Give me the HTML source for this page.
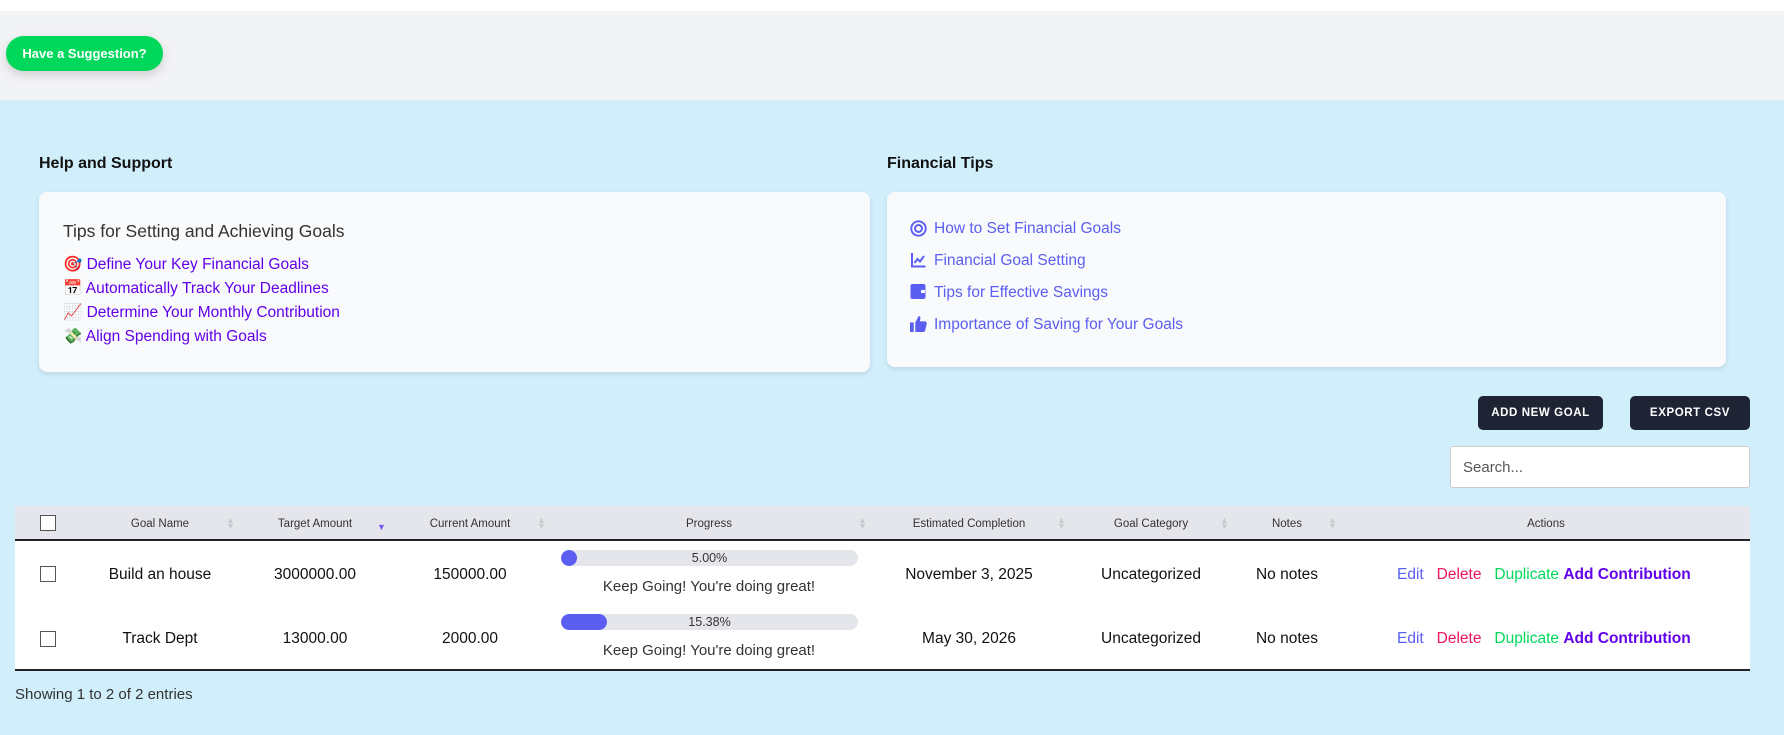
<!DOCTYPE html>
<html><head><meta charset="utf-8"><style>
*{margin:0;padding:0;box-sizing:border-box}
body{width:1784px;height:735px;overflow:hidden;background:#d1eefb;font-family:"Liberation Sans",sans-serif;position:relative;color:#111}
.a{position:absolute;white-space:nowrap}
.top{position:absolute;left:0;top:0;width:1784px;height:11px;background:#fff}
.gray{position:absolute;left:0;top:11px;width:1784px;height:89px;background:#f2f3f5}
.sug{left:6px;top:36px;width:157px;height:35px;border-radius:18px;background:#00d85c;color:#fff;font-weight:bold;font-size:13px;line-height:35px;text-align:center;box-shadow:0 4px 10px rgba(0,0,0,.15)}
.h{font-weight:bold;font-size:16px;color:#111}
.card{position:absolute;background:#f8fafc;border-radius:8px;box-shadow:0 2px 5px rgba(0,0,0,.1)}
.lk{color:#6200ea;font-size:15.5px}
.rl{color:#5b5ef0;font-size:15.5px}
.btn{background:#1e2433;color:#fff;font-size:11.5px;font-weight:bold;letter-spacing:0.6px;border-radius:5px;text-align:center;line-height:34px;height:34px}
.search{left:1450px;top:446px;width:300px;height:42px;background:#fff;border:1px solid #ccc;border-radius:3px;font-size:15px;color:#555;padding:12px 12px}
.thead{position:absolute;left:15px;top:506px;width:1735px;height:35px;background:#e4e6eb;border-bottom:2px solid #222}
.tbody{position:absolute;left:15px;top:541px;width:1735px;height:130px;background:#fff;border-bottom:2px solid #222}
.th{font-size:11.5px;color:#333;transform:translateX(-50%);top:518px}
.td{font-size:15.5px;color:#111;transform:translateX(-50%)}
.cb{position:absolute;width:16px;height:16px;border:1.5px solid #555;background:#fff}
.so{font-size:9px;color:#c8cad0;line-height:6px;top:517px}
.bar{position:absolute;left:561px;width:297px;height:16px;background:#e4e6eb;border-radius:8px;overflow:hidden}
.fill{position:absolute;left:0;top:0;height:16px;background:#5b5ef0;border-radius:8px}
.pt{position:absolute;width:100%;text-align:center;font-size:12.5px;line-height:16px;color:#333}
.msg{font-size:15px;color:#333;transform:translateX(-50%);left:709px}
.act{font-size:15.5px}
</style></head><body>
<div class="top"></div><div class="gray"></div>
<div class="a sug">Have a Suggestion?</div>

<div class="a h" style="left:39px;top:155px">Help and Support</div>
<div class="a h" style="left:887px;top:155px">Financial Tips</div>

<div class="card" style="left:39px;top:192px;width:831px;height:180px"></div>
<div class="a" style="left:63px;top:221px;font-size:17.5px;color:#333">Tips for Setting and Achieving Goals</div>
<div class="a lk" style="left:63px;top:255px">🎯 Define Your Key Financial Goals</div>
<div class="a lk" style="left:63px;top:279px">📅 Automatically Track Your Deadlines</div>
<div class="a lk" style="left:63px;top:303px">📈 Determine Your Monthly Contribution</div>
<div class="a lk" style="left:63px;top:327px">💸 Align Spending with Goals</div>

<div class="card" style="left:887px;top:192px;width:839px;height:175px"></div>
<svg class="a" style="left:910px;top:220px" width="17" height="17" viewBox="0 0 16 16"><circle cx="8" cy="8" r="6.8" fill="none" stroke="#5b5ef0" stroke-width="1.8"/><circle cx="8" cy="8" r="3.3" fill="none" stroke="#5b5ef0" stroke-width="1.8"/></svg>
<div class="a rl" style="left:934px;top:220px">How to Set Financial Goals</div>
<svg class="a" style="left:910px;top:252px" width="17" height="16" viewBox="0 0 16 16"><path d="M1.5 1v13.5H15" fill="none" stroke="#5b5ef0" stroke-width="2"/><path d="M4 11l3-4 2.5 2.5L13.5 4" fill="none" stroke="#5b5ef0" stroke-width="2"/></svg>
<div class="a rl" style="left:934px;top:252px">Financial Goal Setting</div>
<svg class="a" style="left:910px;top:283px" width="16" height="17" viewBox="0 0 16 17"><rect x="0.5" y="1" width="15" height="15" rx="2" fill="#5b5ef0"/><rect x="11" y="7" width="4" height="3" fill="#f8fafc"/></svg>
<div class="a rl" style="left:934px;top:284px">Tips for Effective Savings</div>
<svg class="a" style="left:910px;top:315px" width="17" height="17" viewBox="0 0 16 16"><rect x="0" y="7" width="3.5" height="9" fill="#5b5ef0"/><path d="M5 7l3-6c1.5 0 2 1 1.7 2.5L9.2 6H14c1.2 0 2 1 1.7 2.2l-1.3 6.2c-.2 1-1 1.6-2 1.6H5z" fill="#5b5ef0"/></svg>
<div class="a rl" style="left:934px;top:316px">Importance of Saving for Your Goals</div>

<div class="a btn" style="left:1478px;top:396px;width:125px">ADD NEW GOAL</div>
<div class="a btn" style="left:1630px;top:396px;width:120px">EXPORT CSV</div>
<div class="a search">Search...</div>

<div class="thead"></div><div class="tbody"></div>
<div class="cb" style="left:40px;top:515px"></div>
<div class="a th" style="left:160px">Goal Name</div>
<div class="a th" style="left:315px">Target Amount</div>
<div class="a th" style="left:470px">Current Amount</div>
<div class="a th" style="left:709px">Progress</div>
<div class="a th" style="left:969px">Estimated Completion</div>
<div class="a th" style="left:1151px">Goal Category</div>
<div class="a th" style="left:1287px">Notes</div>
<div class="a th" style="left:1546px">Actions</div>
<div class="a so" style="left:226px">▲<br>▼</div>
<div class="a" style="left:377px;top:522px;font-size:9px;color:#7b5cf0">▼</div>
<div class="a so" style="left:537px">▲<br>▼</div>
<div class="a so" style="left:858px">▲<br>▼</div>
<div class="a so" style="left:1057px">▲<br>▼</div>
<div class="a so" style="left:1220px">▲<br>▼</div>
<div class="a so" style="left:1328px">▲<br>▼</div>

<div class="cb" style="left:40px;top:566px"></div>
<div class="a td" style="left:160px;top:566px">Build an house</div>
<div class="a td" style="left:315px;top:566px">3000000.00</div>
<div class="a td" style="left:470px;top:566px">150000.00</div>
<div class="bar" style="top:550px"><div class="fill" style="width:16px"></div><div class="pt">5.00%</div></div>
<div class="a msg" style="top:578px">Keep Going! You're doing great!</div>
<div class="a td" style="left:969px;top:566px">November 3, 2025</div>
<div class="a td" style="left:1151px;top:566px">Uncategorized</div>
<div class="a td" style="left:1287px;top:566px">No notes</div>
<div class="a act" style="left:1397px;top:566px"><span style="color:#5b5ef0">Edit</span>&nbsp;&nbsp; <span style="color:#f0145a">Delete</span>&nbsp;&nbsp; <span style="color:#00d85c">Duplicate</span> <b style="color:#6200ea">Add Contribution</b></div>

<div class="cb" style="left:40px;top:631px"></div>
<div class="a td" style="left:160px;top:630px">Track Dept</div>
<div class="a td" style="left:315px;top:630px">13000.00</div>
<div class="a td" style="left:470px;top:630px">2000.00</div>
<div class="bar" style="top:614px"><div class="fill" style="width:46px"></div><div class="pt">15.38%</div></div>
<div class="a msg" style="top:642px">Keep Going! You're doing great!</div>
<div class="a td" style="left:969px;top:630px">May 30, 2026</div>
<div class="a td" style="left:1151px;top:630px">Uncategorized</div>
<div class="a td" style="left:1287px;top:630px">No notes</div>
<div class="a act" style="left:1397px;top:630px"><span style="color:#5b5ef0">Edit</span>&nbsp;&nbsp; <span style="color:#f0145a">Delete</span>&nbsp;&nbsp; <span style="color:#00d85c">Duplicate</span> <b style="color:#6200ea">Add Contribution</b></div>

<div class="a" style="left:15px;top:686px;font-size:15px;color:#333">Showing 1 to 2 of 2 entries</div>
</body></html>
